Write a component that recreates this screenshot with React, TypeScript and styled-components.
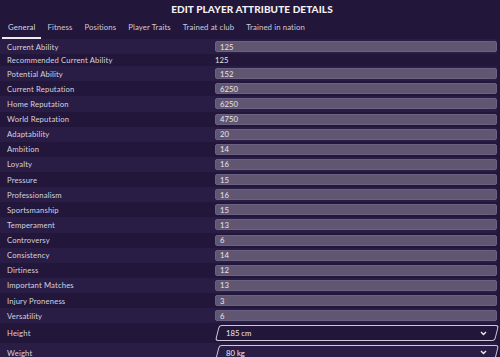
import React from "react";
import styled, { createGlobalStyle } from "styled-components";

const GlobalStyle = createGlobalStyle`
  body {
    margin: 0;
    background: #22163a;
    font-family: Lato, "Open Sans", sans-serif;
  }
`;

const Page = styled.div({
  width: 500,
  height: 357,
  overflow: "hidden",
  background: "#22163a",
  color: "#dcd8e4",
});

const Title = styled.div({
  height: 17,
  display: "flex",
  alignItems: "center",
  justifyContent: "center",
  paddingLeft: 4,
  fontSize: 10,
  fontWeight: 900,
  color: "#f2f0f5",
  letterSpacing: 0.1,
});

const TabBar = styled.div({
  display: "flex",
  height: 22,
  paddingLeft: 2,
});

const Tab = styled.div<{ $active?: boolean }>((p) => ({
  display: "flex",
  alignItems: "center",
  padding: "0 6px",
  fontSize: 7.8,
  letterSpacing: 0.1,
  color: p.$active ? "#d8d4e0" : "#cfc9d9",
  borderBottom: p.$active ? "2px solid #ece9f1" : "2px solid transparent",
}));

const List = styled.div({
  width: 497,
});

const Row = styled.div<{ $striped: boolean; $h: number }>((p) => ({
  display: "flex",
  alignItems: "center",
  height: p.$h,
  background: p.$striped ? "#2a1d45" : "transparent",
}));

const Label = styled.div({
  width: 208,
  paddingLeft: 7,
  fontSize: 7.7,
  letterSpacing: 0.15,
  color: "#d6d1df",
});

const Field = styled.div({
  flex: 1,
  height: 11,
  boxSizing: "border-box",
  display: "flex",
  alignItems: "center",
  paddingLeft: 4,
  background: "#605671",
  border: "1px solid #6b6180",
  borderRadius: 2,
  fontSize: 7.7,
  color: "#e8e4ee",
});

const PlainValue = styled.div({
  flex: 1,
  fontSize: 7.7,
  color: "#e8e4ee",
});

const Select = styled.div({
  position: "relative",
  flex: 1,
  height: 16,
  display: "flex",
  alignItems: "center",
  justifyContent: "space-between",
  padding: "0 10px 0 9px",
  marginLeft: 2,
  fontSize: 7.7,
  color: "#eeebf2",
  "&::before": {
    content: '""',
    position: "absolute",
    inset: 0,
    border: "1px solid #cdc7d6",
    borderRadius: 3,
    transform: "skewX(-14deg)",
  },
});

const Chevron = () => (
  <svg width="7" height="5" viewBox="0 0 7 5">
    <path d="M1 1 L3.5 3.5 L6 1" fill="none" stroke="#eeebf2" strokeWidth="1.4" />
  </svg>
);

type Item = { label: string; value: string; kind?: "plain" | "select" };

const items: Item[] = [
  { label: "Current Ability", value: "125" },
  { label: "Recommended Current Ability", value: "125", kind: "plain" },
  { label: "Potential Ability", value: "152" },
  { label: "Current Reputation", value: "6250" },
  { label: "Home Reputation", value: "6250" },
  { label: "World Reputation", value: "4750" },
  { label: "Adaptability", value: "20" },
  { label: "Ambition", value: "14" },
  { label: "Loyalty", value: "16" },
  { label: "Pressure", value: "15" },
  { label: "Professionalism", value: "16" },
  { label: "Sportsmanship", value: "15" },
  { label: "Temperament", value: "13" },
  { label: "Controversy", value: "6" },
  { label: "Consistency", value: "14" },
  { label: "Dirtiness", value: "12" },
  { label: "Important Matches", value: "13" },
  { label: "Injury Proneness", value: "3" },
  { label: "Versatility", value: "6" },
  { label: "Height", value: "185 cm", kind: "select" },
  { label: "Weight", value: "80 kg", kind: "select" },
];

const tabs = ["General", "Fitness", "Positions", "Player Traits", "Trained at club", "Trained in nation"];

const App = () => {
  return (
    <Page>
      <GlobalStyle />
      <Title>EDIT PLAYER ATTRIBUTE DETAILS</Title>
      <TabBar>
        {tabs.map((t, i) => (
          <Tab key={t} $active={i === 0}>
            {t}
          </Tab>
        ))}
      </TabBar>
      <List>
        {items.map((item, i) => {
          const h = item.kind === "select" ? 19.5 : item.kind === "plain" ? 12 : 15.125;
          return (
            <Row key={item.label} $striped={i % 2 === 0} $h={h}>
              <Label>{item.label}</Label>
              {item.kind === "plain" && <PlainValue>{item.value}</PlainValue>}
              {item.kind === "select" && (
                <Select>
                  <span>{item.value}</span>
                  <Chevron />
                </Select>
              )}
              {!item.kind && <Field>{item.value}</Field>}
            </Row>
          );
        })}
      </List>
    </Page>
  );
};

export default App;
